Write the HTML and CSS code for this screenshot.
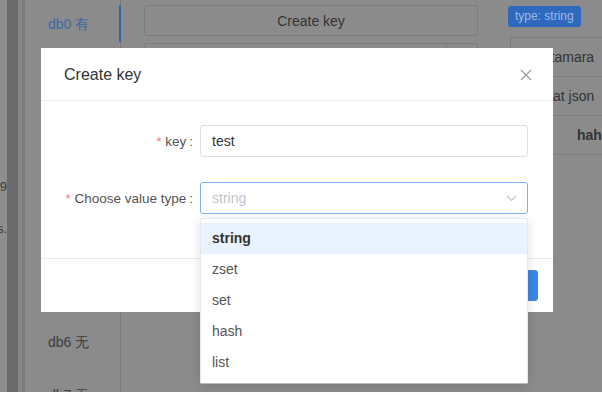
FILE: index.html
```html
<!DOCTYPE html>
<html>
<head>
<meta charset="utf-8">
<link rel="stylesheet" href="styles.css">
</head>
<body>
<div class="app">
  <div class="edge">
    <div class="e1">
      <div class="cut cut-a">log9</div>
      <div class="cut cut-b">keys.</div>
    </div>
    <div class="e2"></div>
    <div class="e3"></div>
    <div class="e4"></div>
  </div>
  <nav class="sidebar">
    <div class="tab active">db0 有</div>
    <div class="tab">db1 无</div>
    <div class="tab">db2 无</div>
    <div class="tab">db3 无</div>
    <div class="tab">db4 无</div>
    <div class="tab">db5 无</div>
    <div class="tab">db6 无</div>
    <div class="tab">db7 无</div>
  </nav>
  <main class="main">
    <button class="bg-btn">Create key</button>
    <div class="search">
      <span class="search-field"></span>
      <span class="search-append"></span>
    </div>
  </main>
  <aside class="right">
    <span class="tag">type: string</span>
    <div class="table">
      <div class="row r1">key: tamara</div>
      <div class="row r2">format json</div>
      <div class="row r3">haha</div>
    </div>
  </aside>
</div>

<div class="modal">
  <div class="modal-header">
    <span class="modal-title">Create key</span>
    <svg class="close" width="12" height="12" viewBox="0 0 12 12"><path d="M1 1L11 11M11 1L1 11" stroke="#9a9a9a" stroke-width="1.3" fill="none"/></svg>
  </div>
  <div class="modal-body">
    <div class="form-item">
      <label class="label"><span class="req">*</span> key</label>
      <div class="input">test</div>
    </div>
    <div class="form-item">
      <label class="label"><span class="req">*</span> Choose value type</label>
      <div class="input select">
        <span class="placeholder">string</span>
        <svg class="arrow" width="11" height="7" viewBox="0 0 11 7"><path d="M1 1L5.5 5.5L10 1" stroke="#c0c4cc" stroke-width="1.2" fill="none"/></svg>
      </div>
    </div>
  </div>
  <div class="modal-footer">
    <button class="btn">Cancel</button>
    <button class="btn primary">OK</button>
  </div>
</div>

<ul class="dropdown">
  <li class="opt hover">string</li>
  <li class="opt">zset</li>
  <li class="opt">set</li>
  <li class="opt">hash</li>
  <li class="opt">list</li>
</ul>
</body>
</html>
```

FILE: styles.css
```css
html, body {
  margin: 0;
  padding: 0;
}
body {
  width: 602px;
  height: 395px;
  overflow: hidden;
  background: #ffffff;
  font-family: "Liberation Sans", Arial, sans-serif;
  position: relative;
}
.app {
  display: flex;
  height: 392px;
  background: #8b8b8b;
  overflow: hidden;
}
.edge {
  display: flex;
  width: 25px;
  flex: none;
}
.e1 {
  width: 7px;
  background: #8e8e8e;
  display: flex;
  flex-direction: column;
  padding-top: 178px;
  overflow: hidden;
}
.cut {
  display: flex;
  justify-content: flex-end;
  white-space: nowrap;
  font-size: 13px;
  line-height: 18px;
  color: #3a3a3a;
}
.cut-b {
  margin-top: 24px;
}
.e2 { width: 11px; background: #6b6b6b; }
.e3 { width: 4px; background: #858585; }
.e4 { width: 3px; background: #7a7a7a; }

.sidebar {
  width: 95px;
  flex: none;
  border-right: 1px solid #7b7b7b;
  padding-top: 4px;
  box-sizing: content-box;
}
.tab {
  height: 40px;
  line-height: 40px;
  padding-left: 23px;
  margin-bottom: 13px;
  font-size: 14px;
  color: #3c3c3c;
  position: relative;
}
.tab.active {
  color: #3c68a6;
}
.tab.active::after {
  content: "";
  position: absolute;
  right: -1px;
  top: 1px;
  width: 2px;
  height: 37px;
  background: #3565a8;
}

.main {
  width: 334px;
  flex: none;
  padding: 5px 22px 0 23px;
  display: flex;
  flex-direction: column;
  gap: 7px;
}
.bg-btn {
  height: 31px;
  border: 1px solid #7c7c7c;
  background: #8b8b8b;
  border-radius: 3px;
  font-family: inherit;
  font-size: 14px;
  color: #333;
  padding: 0;
}
.search {
  height: 32px;
  display: flex;
  border: 1px solid #7c7c7c;
  border-radius: 3px;
}
.search-field { flex: 1; }
.search-append { width: 30px; border-left: 1px solid #7c7c7c; }

.right {
  flex: 1;
  padding: 6px 0 0 8px;
  display: flex;
  flex-direction: column;
  align-items: flex-start;
  min-width: 0;
}
.tag {
  height: 21px;
  line-height: 21px;
  padding: 0 7px;
  background: #2e69bd;
  color: #9cbbe6;
  font-size: 12px;
  border-radius: 3px;
}
.table {
  margin-top: 10px;
  margin-left: 2px;
  width: 140px;
  border: 1px solid #7b7b7b;
  border-bottom: none;
}
.row {
  height: 38px;
  line-height: 38px;
  border-bottom: 1px solid #7e7e7e;
  font-size: 14px;
  color: #333;
  white-space: nowrap;
}
.r1 { padding-left: 10px; }
.r2 { padding-left: 14px; }
.r3 { padding-left: 66px; font-weight: bold; }

/* modal */
.modal {
  position: absolute;
  left: 41px;
  top: 48px;
  width: 512px;
  height: 264px;
  background: #ffffff;
  display: flex;
  flex-direction: column;
}
.modal-header {
  height: 52px;
  flex: none;
  display: flex;
  align-items: center;
  justify-content: space-between;
  padding: 0 21px 0 23px;
  border-bottom: 1px solid #eeeeee;
}
.modal-title {
  font-size: 16px;
  color: #333333;
  margin-top: 1px;
}
.close {
  margin-top: 1px;
}
.modal-body {
  height: 157px;
  flex: none;
  padding: 24px 25px 0 0;
  box-sizing: border-box;
  display: flex;
  flex-direction: column;
  gap: 25px;
}
.form-item {
  display: flex;
  align-items: center;
}
.label {
  width: 159px;
  flex: none;
  text-align: right;
  padding-right: 7px;
  box-sizing: border-box;
  font-size: 13.5px;
  color: #555555;
}
.label::after {
  content: ":";
  margin-left: 3px;
}
.req {
  color: #f08080;
}
.input {
  flex: 1;
  height: 32px;
  box-sizing: border-box;
  border: 1px solid #dcdfe6;
  border-radius: 3px;
  padding: 0 11px;
  display: flex;
  align-items: center;
  font-size: 14px;
  color: #333333;
}
.select {
  border-color: #7fb2ee;
  justify-content: space-between;
  padding-right: 10px;
}
.placeholder {
  color: #c0c4cc;
}
.modal-footer {
  flex: 1;
  border-top: 1px solid #ececec;
  display: flex;
  justify-content: flex-end;
  align-items: center;
  gap: 10px;
  padding-right: 15px;
}
.btn {
  height: 31px;
  padding: 0 16px;
  border: 1px solid #dcdfe6;
  background: #fff;
  border-radius: 3px;
  font-family: inherit;
  font-size: 13px;
  color: #606266;
}
.btn.primary {
  background: #3d87e6;
  border-color: #3d87e6;
  color: #fff;
}

/* dropdown */
.dropdown {
  position: absolute;
  left: 200px;
  top: 218px;
  width: 328px;
  box-sizing: border-box;
  margin: 0;
  padding: 4px 0 5px;
  list-style: none;
  background: #ffffff;
  border: 1px solid #e4e7ed;
  border-bottom-color: #b8b8b8;
  border-radius: 2px;
  box-shadow: 0 2px 12px rgba(0, 0, 0, 0.12);
}
.opt {
  height: 31px;
  line-height: 31px;
  padding: 0 11px;
  font-size: 14px;
  color: #555555;
}
.opt.hover {
  background: #e9f3fd;
  color: #333333;
  font-weight: bold;
}
```
